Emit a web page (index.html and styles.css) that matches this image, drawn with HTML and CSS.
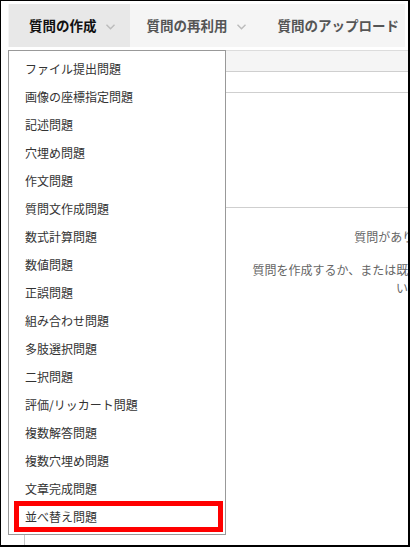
FILE: index.html
```html
<!DOCTYPE html>
<html lang="ja">
<head>
    <meta charset="UTF-8">
    <meta name="viewport" content="width=device-width, initial-scale=1.0">
    <title>質問の作成</title>
    <link rel="stylesheet" href="styles.css">
</head>
<body>
    <div class="frame">

        <!-- Tabs -->
        <div class="nav">
            <div class="tab active">
                質問の作成
                <svg class="chevron" width="9" height="6" viewBox="0 0 9 6"><polyline points="0.5,0.8 4.5,4.8 8.5,0.8" /></svg>
            </div>
            <div class="tab">
                質問の再利用
                <svg class="chevron" width="9" height="6" viewBox="0 0 9 6"><polyline points="0.5,0.8 4.5,4.8 8.5,0.8" /></svg>
            </div>
            <div class="tab">質問のアップロード</div>
        </div>

        <!-- Question list panel -->
        <div class="panel">
            <div class="toolbar"></div>
            <div class="filter"></div>
            <div class="box"></div>
            <div class="empty">
                <p>質問がありません。</p>
                <p>質問を作成するか、または既存の質問を再利用してください。</p>
            </div>
        </div>

        <!-- Create menu -->
        <ul class="menu">
            <li>ファイル提出問題</li>
            <li>画像の座標指定問題</li>
            <li>記述問題</li>
            <li>穴埋め問題</li>
            <li>作文問題</li>
            <li>質問文作成問題</li>
            <li>数式計算問題</li>
            <li>数値問題</li>
            <li>正誤問題</li>
            <li>組み合わせ問題</li>
            <li>多肢選択問題</li>
            <li>二択問題</li>
            <li>評価/リッカート問題</li>
            <li>複数解答問題</li>
            <li>複数穴埋め問題</li>
            <li>文章完成問題</li>
            <li class="marked">並べ替え問題</li>
        </ul>

    </div>
</body>
</html>
```

FILE: styles.css
```css
/* Global */
body {
    margin: 0;
    font-family: 'Noto Sans CJK JP', 'Noto Sans', sans-serif;
    color: #333;
    background-color: #ffffff;
}

.frame {
    position: relative;
    width: 410px;
    height: 547px;
    box-sizing: border-box;
    border-style: solid;
    border-color: #000;
    border-width: 1px 2px 2px 1px;
    overflow: hidden;
    background-color: #ffffff;
}

/* Tabs */
.nav {
    display: flex;
    height: 43px;
    margin: 3px 3px 0 7px;
    padding-left: 1px;
    background-color: #f5f5f5;
}

.tab {
    display: flex;
    align-items: center;
    padding: 0 15px 2px 17px;
    font-size: 13.5px;
    font-weight: bold;
    color: #555;
    white-space: nowrap;
}

.tab.active {
    padding-left: 20px;
    background-color: #e8e8e8;
    color: #111;
}

.chevron {
    margin: 4px 0 0 9px;
}

.chevron polyline {
    fill: none;
    stroke: #bbb;
    stroke-width: 1.4;
}

/* Panel behind the menu */
.panel {
    width: 766px;
    height: 500px;
    margin: 3px 0 0 23px;
    border-left: 1px solid #c8c8c8;
    border-top: 1px solid #dcdcdc;
}

.toolbar {
    height: 20px;
    background-color: #f5f5f5;
    border-bottom: 1px solid #cfcfcf;
}

.filter {
    height: 20px;
    border-bottom: 1px solid #cfcfcf;
}

.box {
    height: 114px;
    border-bottom: 1px solid #cfcfcf;
}

.empty {
    padding-top: 20px;
    width: 312px;
    margin: 0 auto;
    text-align: center;
    font-size: 12px;
    line-height: 18px;
    color: #666;
}

.empty p {
    margin: 0 0 15px;
}

/* Dropdown menu */
.menu {
    position: absolute;
    left: 7px;
    top: 49px;
    width: 216px;
    margin: 0;
    padding: 4px 0 3px;
    list-style: none;
    background-color: #ffffff;
    border: 1px solid #999;
}

.menu li {
    position: relative;
    height: 28px;
    line-height: 28px;
    padding-left: 16px;
    font-size: 12px;
    color: #333;
}

/* Red annotation box */
.menu li.marked::after {
    content: "";
    position: absolute;
    left: 5px;
    right: 2px;
    top: -2px;
    bottom: -1px;
    border: 5px solid #ff0000;
}
```
